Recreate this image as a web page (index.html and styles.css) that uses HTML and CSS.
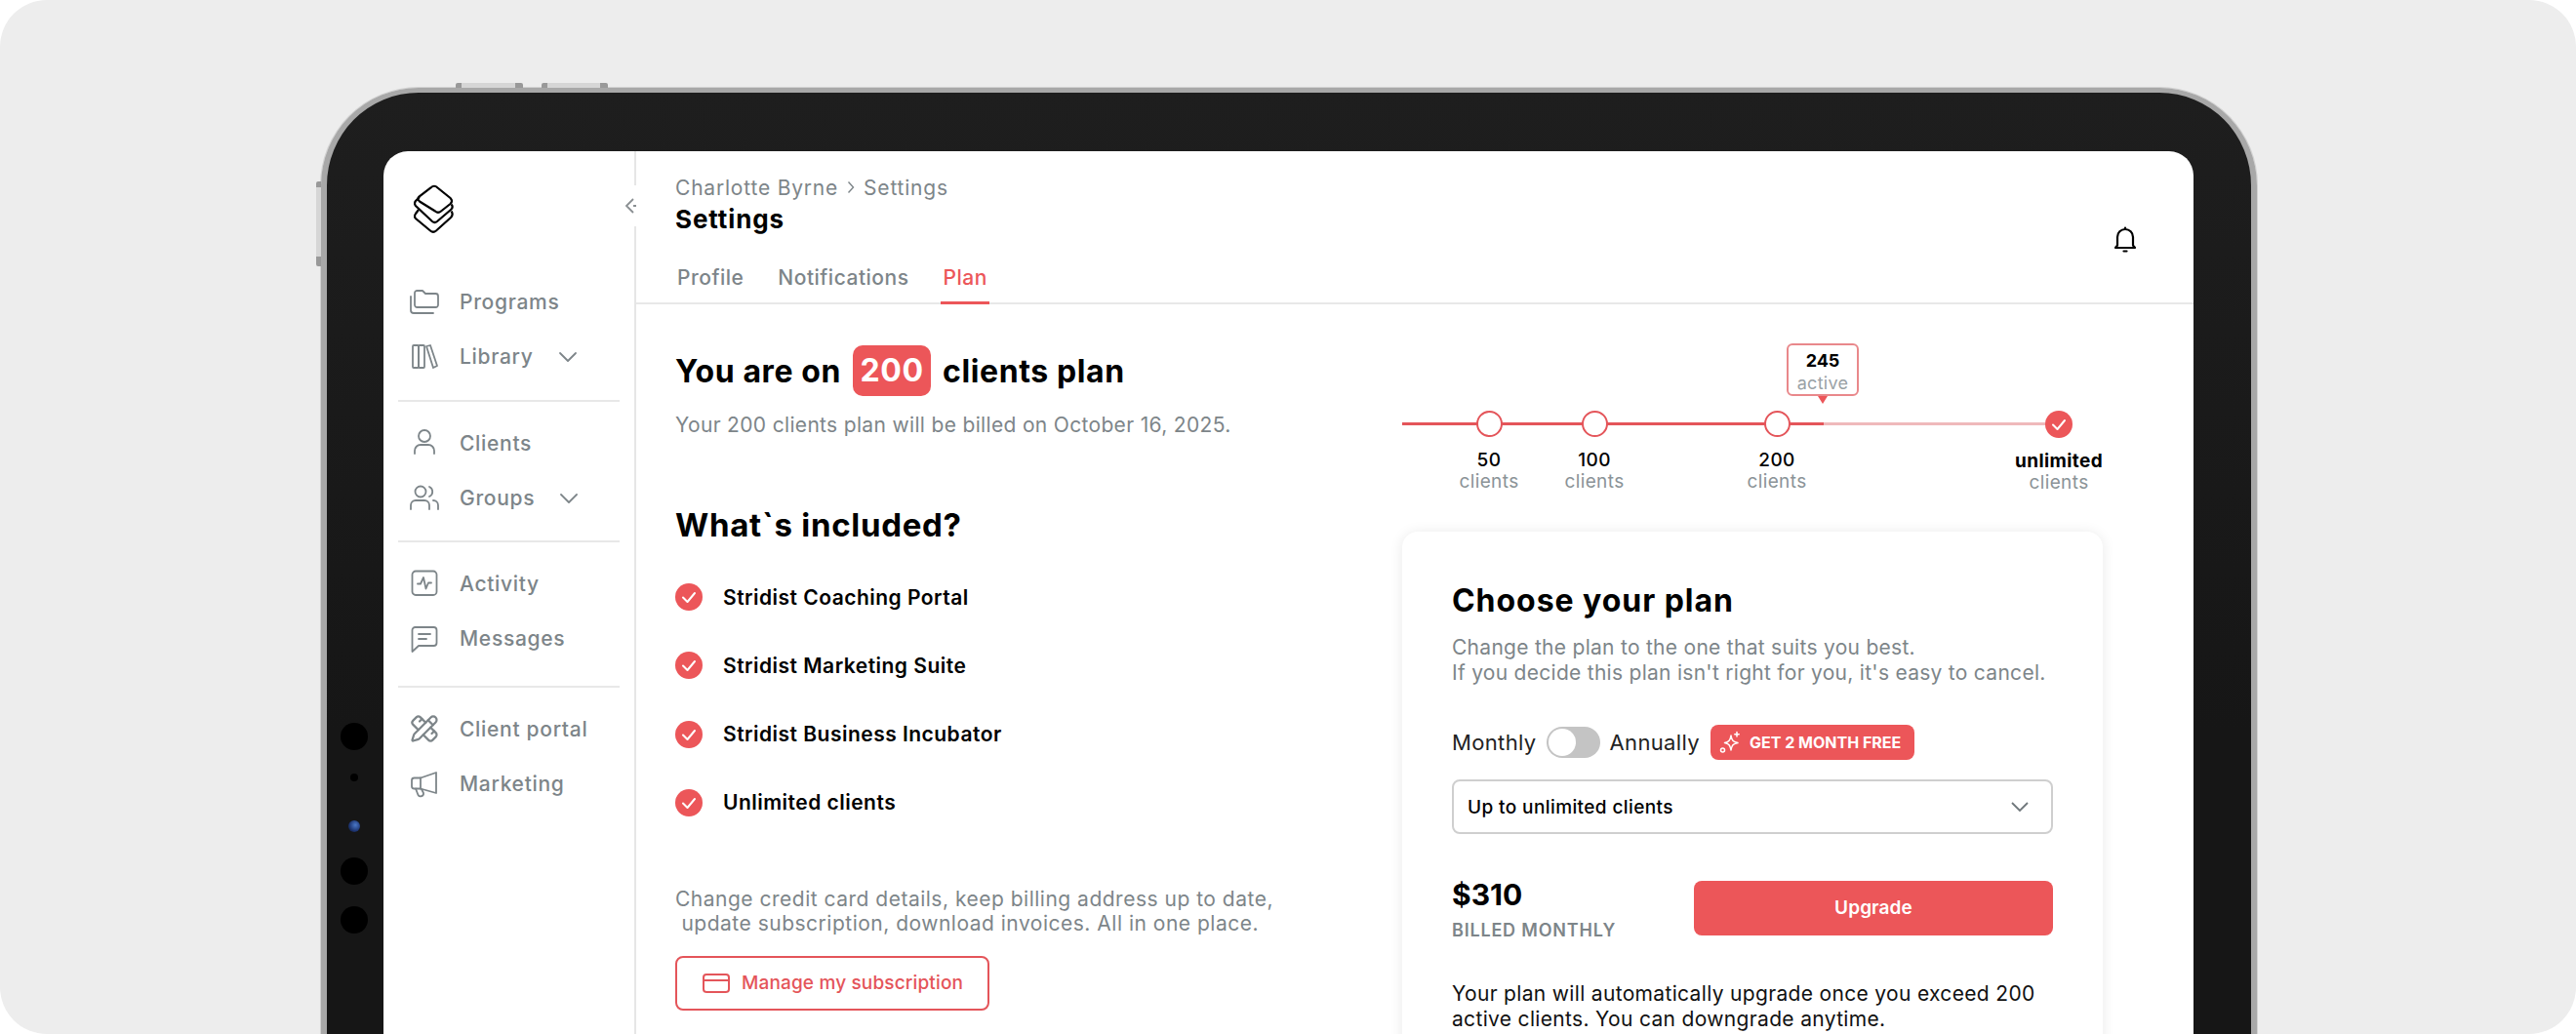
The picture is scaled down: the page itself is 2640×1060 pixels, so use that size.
FILE: index.html
```html
<!DOCTYPE html>
<html lang="en">
<head>
  <meta charset="UTF-8">
  <meta name="viewport" content="width=device-width, initial-scale=1.0">
  <title>Settings – Plan</title>
  <link rel="stylesheet" href="styles.css">
</head>
<body>
  <div class="stage">
    <div class="tablet">
      <span class="hw-btn hw-top-a"></span>
      <span class="hw-btn hw-top-b"></span>
      <span class="hw-btn hw-left"></span>
      <span class="lens lens-a"></span>
      <span class="lens lens-b"></span>
      <span class="lens lens-c"></span>
      <span class="lens lens-d"></span>
      <span class="lens lens-e"></span>

      <div class="screen">
        <div class="sidebar">
          <svg class="logo" viewBox="0 0 42 50">
            <path d="M17.5 3.5Q21 0 24.5 3.5L37.5 14Q40.5 17 37.5 20L28 27.5Q25 30 22 27.5L6 17.5Q3 15 5.5 12.5Z"/>
            <path d="M6 13L2 17Q0 19.5 2 22L19 38Q21.5 40 24 38L38 26Q41 23 38.5 20.5"/>
            <path d="M5 26L2 30Q0 33 2 35L17 47.5Q20 50 23 47.5L38 34Q41 31 38.5 27.5"/>
          </svg>
          <div class="collapse">
            <svg viewBox="0 0 14 18"><path d="M9 2L2 9L9 16M9 9H12"/></svg>
          </div>

          <div class="nav nav-first">
            <a class="nav-item">
              <svg viewBox="0 0 30 30"><path d="M5 19V6.5A2.5 2.5 0 0 1 7.5 4H13L16 7H26.5A2.5 2.5 0 0 1 29 9.500V18.500A2.500 2.500 0 0 1 26.500 21H7.500A2.500 2.500 0 0 1 5 18.500Z"/><path d="M1 10V24A3 3 0 0 0 4 27H24"/></svg>
              <span>Programs</span>
            </a>
            <a class="nav-item">
              <svg viewBox="0 0 30 30"><rect x="3" y="3" width="6" height="23" rx="1"/><rect x="9" y="3" width="6" height="23" rx="1"/><path d="M17 4L21 3L28 24L24 26Z"/></svg>
              <span>Library</span>
              <svg class="caret" viewBox="0 0 20 12"><path d="M2 2L10 10L18 2"/></svg>
            </a>
          </div>
          <div class="nav">
            <a class="nav-item">
              <svg viewBox="0 0 30 30"><circle cx="15" cy="8" r="6"/><path d="M5 26V23A6 6 0 0 1 11 17H19A6 6 0 0 1 25 23V26"/></svg>
              <span>Clients</span>
            </a>
            <a class="nav-item">
              <svg viewBox="0 0 30 30"><circle cx="11" cy="8" r="5.500"/><path d="M20 3A5.500 5.500 0 0 1 20 13"/><path d="M1 26V22A5 5 0 0 1 6 17H15A5 5 0 0 1 20 22V26"/><path d="M24 17A5 5 0 0 1 29 22V26"/></svg>
              <span>Groups</span>
              <svg class="caret" viewBox="0 0 20 12"><path d="M2 2L10 10L18 2"/></svg>
            </a>
          </div>
          <div class="nav">
            <a class="nav-item">
              <svg viewBox="0 0 30 30"><rect x="2.500" y="2.500" width="25" height="24.500" rx="3.500"/><path d="M8 15.500H11L14 9L16.500 20.500L19 14.500H22"/></svg>
              <span>Activity</span>
            </a>
            <a class="nav-item">
              <svg viewBox="0 0 30 30"><path d="M2.500 28V6A3 3 0 0 1 5.500 3H24.500A3 3 0 0 1 27.500 6V19A3 3 0 0 1 24.500 22H9Z"/><path d="M9 10H21M9 15H17"/></svg>
              <span>Messages</span>
            </a>
          </div>
          <div class="nav nav-last">
            <a class="nav-item">
              <svg viewBox="0 0 24 24"><path d="M13 7 8.700 2.700a2.410 2.410 0 0 0-3.400 0L2.700 5.300a2.410 2.410 0 0 0 0 3.400L7 13"/><path d="m8 6 2-2"/><path d="m18 16 2-2"/><path d="m17 11 4.300 4.300c.94.94.94 2.460 0 3.400l-2.600 2.600c-.94.94-2.460.94-3.400 0L11 17"/><path d="M21.174 6.812a1 1 0 0 0-3.986-3.987L3.842 16.174a2 2 0 0 0-.5.83l-1.321 4.352a.5.5 0 0 0 .623.622l4.353-1.320a2 2 0 0 0 .83-.497z"/><path d="m15 5 4 4"/></svg>
              <span>Client portal</span>
            </a>
            <a class="nav-item">
              <svg viewBox="0 0 30 30"><path d="M27 3L11 8.500H4.500A2.500 2.500 0 0 0 2 11V17A2.500 2.500 0 0 0 4.500 19.500H11L27 24Z"/><path d="M11 8.500V19.500"/><path d="M6 19.500L8.500 26A3 3 0 0 0 14 24L12 20"/></svg>
              <span>Marketing</span>
            </a>
          </div>
        </div>

        <div class="main">
          <div class="header">
            <div class="header-top">
              <div>
                <div class="crumbs">
                  <span>Charlotte Byrne</span>
                  <svg viewBox="0 0 8 14"><path d="M1.500 1.500L6.500 7L1.500 12.500"/></svg>
                  <span>Settings</span>
                </div>
                <h1 class="page-title">Settings</h1>
              </div>
              <svg class="bell" viewBox="0 0 24 28"><path d="M2 23H22L20 20.500V12A8 8 0 0 0 4 12V20.500Z"/><path d="M12 4V2.500"/><path d="M10.500 26.500H13.500"/></svg>
            </div>
            <div class="tabs">
              <a class="tab">Profile</a>
              <a class="tab">Notifications</a>
              <a class="tab tab-active">Plan</a>
            </div>
          </div>

          <div class="content">
            <div class="left">
              <div class="plan-title">
                <span>You are on</span>
                <span class="plan-badge">200</span>
                <span>clients plan</span>
              </div>
              <p class="muted billed">Your 200 clients plan will be billed on October 16, 2025.</p>

              <h2 class="section-title">What`s included?</h2>
              <ul class="features">
                <li>
                  <svg class="check" viewBox="0 0 28 28"><circle cx="14" cy="14" r="14"/><path d="M8 14.500L12.500 19L20 10"/></svg>
                  Stridist Coaching Portal
                </li>
                <li>
                  <svg class="check" viewBox="0 0 28 28"><circle cx="14" cy="14" r="14"/><path d="M8 14.500L12.500 19L20 10"/></svg>
                  Stridist Marketing Suite
                </li>
                <li>
                  <svg class="check" viewBox="0 0 28 28"><circle cx="14" cy="14" r="14"/><path d="M8 14.500L12.500 19L20 10"/></svg>
                  Stridist Business Incubator
                </li>
                <li>
                  <svg class="check" viewBox="0 0 28 28"><circle cx="14" cy="14" r="14"/><path d="M8 14.500L12.500 19L20 10"/></svg>
                  Unlimited clients
                </li>
              </ul>

              <p class="muted manage-text">Change credit card details, keep billing address up to date,<br>&nbsp;update subscription, download invoices. All in one place.</p>
              <a class="manage-btn">
                <svg viewBox="0 0 28 20"><rect x="1" y="1" width="26" height="18" rx="3"/><path d="M1 7H27"/></svg>
                Manage my subscription
              </a>
            </div>

            <div class="right">
              <div class="scale">
                <div class="track"><div class="track-fill"></div></div>
                <div class="tip"><b>245</b><span>active</span></div>
                <div class="stop" style="left: 89px"><i class="dot"></i><b>50</b><span>clients</span></div>
                <div class="stop" style="left: 197px"><i class="dot"></i><b>100</b><span>clients</span></div>
                <div class="stop" style="left: 384px"><i class="dot"></i><b>200</b><span>clients</span></div>
                <div class="stop stop-top" style="left: 673px">
                  <svg class="check" viewBox="0 0 28 28"><circle cx="14" cy="14" r="14"/><path d="M8 14.500L12.500 19L20 10"/></svg>
                  <b>unlimited</b><span>clients</span>
                </div>
              </div>

              <div class="card">
                <h2 class="card-title">Choose your plan</h2>
                <p class="muted card-sub">Change the plan to the one that suits you best.<br>If you decide this plan isn't right for you, it's easy to cancel.</p>

                <div class="billing">
                  <span>Monthly</span>
                  <span class="toggle"><i></i></span>
                  <span>Annually</span>
                  <span class="promo">
                    <svg viewBox="0 0 22 24"><path d="M12 5C12.800 10 14 11.500 19 12.500C14 13.500 12.800 15 12 20C11.200 15 10 13.500 5.500 12.500C10 11.500 11.200 10 12 5Z"/><path d="M18 1.500V6M15.800 3.700H20.200"/><circle cx="3.500" cy="20" r="2"/></svg>
                    GET 2 MONTH FREE
                  </span>
                </div>

                <div class="select">
                  <span>Up to unlimited clients</span>
                  <svg viewBox="0 0 20 12"><path d="M2 2L10 10L18 2"/></svg>
                </div>

                <div class="price-row">
                  <div class="price-col">
                    <div class="price">$310</div>
                    <div class="price-note">BILLED MONTHLY</div>
                  </div>
                  <a class="upgrade">Upgrade</a>
                </div>

                <p class="card-note">Your plan will automatically upgrade once you exceed 200<br>active clients. You can downgrade anytime.</p>
              </div>
            </div>
          </div>
        </div>
      </div>
    </div>
  </div>
</body>
</html>
```

FILE: styles.css
```css
* {
  box-sizing: border-box;
}
body {
  margin: 0;
  background: #fff;
  font-family: Inter, "Noto Sans", sans-serif;
  color: #000;
}
.stage {
  height: 1060px;
  padding: 90px 0 0 329px;
  background: #ededed;
  border-radius: 48px;
  overflow: hidden;
}
.tablet {
  position: relative;
  width: 1984px;
  height: 1100px;
  padding: 60px 59px 0 58px;
  background: linear-gradient(#1e1e1e, #161616 60%);
  border: solid #a8a8a8;
  border-width: 5px 6px;
  border-radius: 100px;
  box-shadow: 0 0 0 1px #d2d2d2;
}
.hw-btn {
  position: absolute;
}
.hw-top-a, .hw-top-b {
  top: -10px;
  height: 5px;
  border-radius: 2px 2px 0 0;
  background: linear-gradient(90deg, #999 0 6px, #d6d6d6 6px calc(100% - 8px), #999 calc(100% - 8px));
}
.hw-top-a {
  left: 132px;
  width: 69px;
}
.hw-top-b {
  left: 220px;
  width: 68px;
}
.hw-left {
  left: -11px;
  top: 91px;
  width: 5px;
  height: 87px;
  border-radius: 2px 0 0 2px;
  background: linear-gradient(#999 0 6px, #d6d6d6 6px calc(100% - 10px), #999 calc(100% - 10px));
}
.lens {
  position: absolute;
  left: 14px;
  width: 28px;
  height: 28px;
  background: #000;
  border-radius: 50%;
}
.lens-a { top: 646px; }
.lens-b { top: 698px; left: 24px; width: 8px; height: 8px; }
.lens-c {
  top: 746px;
  left: 22px;
  width: 12px;
  height: 12px;
  background: radial-gradient(circle at 60% 40%, #4a78c8, #1d3470 60%, #0c1428);
}
.lens-d { top: 784px; }
.lens-e { top: 834px; }

.screen {
  display: flex;
  height: 1040px;
  background: #fff;
  border-radius: 25px 25px 0 0;
  overflow: hidden;
}

/* sidebar */
.sidebar {
  position: relative;
  width: 259px;
  flex-shrink: 0;
  padding: 34px 15px 0;
  border-right: 2px solid #e6e6e6;
}
.logo {
  display: block;
  width: 42px;
  height: 50px;
  margin-left: 16px;
  fill: none;
  stroke: #000;
  stroke-width: 2.200;
}
.collapse {
  position: absolute;
  top: 35px;
  right: -12px;
  width: 22px;
  height: 42px;
  display: flex;
  align-items: center;
  background: #fff;
}
.collapse svg {
  width: 14px;
  height: 18px;
  fill: none;
  stroke: #8a8f92;
  stroke-width: 1.800;
}
.nav {
  padding: 14px 0;
  border-bottom: 2px solid #e8e8e8;
}
.nav-first {
  margin-top: 28px;
  padding-bottom: 16px;
}
.nav:nth-of-type(3) {
  padding-bottom: 15px;
}
.nav:nth-of-type(4) {
  padding-bottom: 20px;
}
.nav-last {
  border-bottom: none;
}
.nav-item {
  display: flex;
  align-items: center;
  gap: 21px;
  height: 56.500px;
  padding-left: 12px;
  color: #7d8589;
  font-size: 21px;
  font-weight: 500;
  letter-spacing: 0.700px;
}
.nav-item > svg {
  width: 30px;
  height: 30px;
  flex-shrink: 0;
  fill: none;
  stroke: #7d8589;
  stroke-width: 1.800;
  stroke-linecap: round;
  stroke-linejoin: round;
}
.nav-item .caret {
  width: 20px;
  height: 12px;
  margin-left: 4px;
}

/* header */
.main {
  flex: 1;
  min-width: 0;
}
.header-top {
  display: flex;
  justify-content: space-between;
  height: 111px;
  padding: 25px 58px 0 40px;
}
.crumbs {
  display: flex;
  align-items: center;
  gap: 9px;
  height: 24px;
  color: #7d8589;
  font-size: 21px;
  letter-spacing: 0.800px;
}
.crumbs svg {
  width: 8px;
  height: 14px;
  fill: none;
  stroke: #7d8589;
  stroke-width: 1.400;
}
.page-title {
  margin: 6px 0 0;
  font-size: 26px;
  line-height: 30px;
  font-weight: 700;
  letter-spacing: 0.900px;
}
.bell {
  align-self: flex-end;
  width: 24px;
  height: 28px;
  margin-bottom: 7px;
  fill: none;
  stroke: #000;
  stroke-width: 2.200;
  stroke-linecap: round;
  stroke-linejoin: round;
}
.tabs {
  display: flex;
  gap: 31px;
  height: 46px;
  padding-left: 40px;
  border-bottom: 2px solid #e8e8e8;
}
.tab {
  height: 46px;
  padding: 0 2px;
  color: #7d8589;
  font-size: 21px;
  font-weight: 500;
  line-height: 38px;
  letter-spacing: 0.500px;
}
.tab-active {
  color: #ec5659;
  border-bottom: 3px solid #ec5659;
}

/* left column */
.content {
  display: flex;
  padding: 0 93px 0 40px;
}
.left {
  flex: 1;
  padding-top: 42px;
}
.muted {
  margin: 0;
  color: #7d8589;
  font-size: 21px;
}
.plan-title {
  display: flex;
  align-items: center;
  height: 52px;
  gap: 12px;
  font-size: 32px;
  font-weight: 700;
  letter-spacing: 0.600px;
}
.plan-badge {
  width: 80px;
  height: 52px;
  color: #fff;
  background: #ec5659;
  border-radius: 10px;
  text-align: center;
  line-height: 52px;
}
.billed {
  margin-top: 18px;
  line-height: 24px;
  letter-spacing: 0.330px;
}
.section-title {
  margin: 72px 0 0;
  font-size: 33px;
  line-height: 36px;
  font-weight: 700;
  letter-spacing: 0.700px;
}
.features {
  display: flex;
  flex-direction: column;
  gap: 40.300px;
  margin: 41px 0 0;
  padding: 0;
  list-style: none;
}
.features li {
  display: flex;
  align-items: center;
  gap: 21px;
  height: 30px;
  font-size: 21px;
  font-weight: 600;
  letter-spacing: 0.480px;
}
.check {
  width: 28px;
  height: 28px;
  flex-shrink: 0;
}
.check circle {
  fill: #ec5659;
}
.check path {
  fill: none;
  stroke: #fff;
  stroke-width: 2;
  stroke-linecap: round;
  stroke-linejoin: round;
}
.manage-text {
  margin-top: 71px;
  line-height: 25px;
  letter-spacing: 0.500px;
}
.manage-btn {
  display: inline-flex;
  align-items: center;
  gap: 12px;
  width: 322px;
  height: 56px;
  margin-top: 21px;
  padding-left: 26px;
  color: #e4555a;
  border: 2px solid #e4555a;
  border-radius: 8px;
  font-size: 19px;
  font-weight: 500;
  letter-spacing: 0.150px;
}
.manage-btn svg {
  width: 28px;
  height: 20px;
  flex-shrink: 0;
  fill: none;
  stroke: #e4555a;
  stroke-width: 2;
}

/* plan scale */
.right {
  width: 718px;
  flex-shrink: 0;
}
.scale {
  position: relative;
  height: 233px;
}
.track {
  position: absolute;
  left: 0;
  top: 121px;
  width: 673px;
  height: 3px;
  background: #efb9bb;
}
.track-fill {
  width: 432px;
  height: 3px;
  background: #e4555a;
}
.tip {
  position: absolute;
  left: 394px;
  top: 40px;
  width: 74px;
  height: 54px;
  padding-top: 4px;
  text-align: center;
  background: #fff;
  border: 2px solid #e9888b;
  border-radius: 6px;
}
.tip::after {
  content: "";
  position: absolute;
  left: 30px;
  bottom: -10px;
  border: solid transparent;
  border-width: 8px 5px 0;
  border-top-color: #ec5659;
}
.tip b, .tip span {
  display: block;
  font-size: 18px;
  line-height: 23px;
}
.tip b {
  font-weight: 700;
}
.tip span {
  color: #9aa2a6;
  letter-spacing: 0.300px;
}
.stop {
  position: absolute;
  top: 109px;
  width: 120px;
  margin-left: -60px;
  display: flex;
  flex-direction: column;
  align-items: center;
  font-size: 19px;
  line-height: 22px;
  letter-spacing: 0.400px;
}
.stop b {
  margin-top: 13px;
  font-weight: 500;
}
.stop span {
  color: #8b9397;
}
.stop-top b {
  font-weight: 700;
}
.dot {
  width: 27px;
  height: 27px;
  background: #fff;
  border: 2px solid #e4555a;
  border-radius: 50%;
}

/* card */
.card {
  height: 560px;
  padding: 53px 51px 0;
  background: #fff;
  border-radius: 16px;
  box-shadow: 0 1px 14px rgba(0, 0, 0, 0.09);
}
.card-title {
  margin: 0;
  font-size: 32px;
  line-height: 36px;
  font-weight: 700;
  letter-spacing: 0.950px;
}
.card-sub {
  margin-top: 17px;
  line-height: 25.500px;
  letter-spacing: 0.280px;
}
.billing {
  display: flex;
  align-items: center;
  height: 36px;
  margin-top: 41px;
  font-size: 22px;
  letter-spacing: 0.350px;
  color: #222;
}
.toggle {
  width: 55px;
  height: 32px;
  margin: 0 10px 0 10px;
  padding: 2px;
  background: #c4c4c4;
  border-radius: 16px;
}
.toggle i {
  display: block;
  width: 28px;
  height: 28px;
  background: #fff;
  border-radius: 50%;
}
.promo {
  display: flex;
  align-items: center;
  gap: 9px;
  width: 209px;
  height: 36px;
  margin-left: 11px;
  padding-left: 9px;
  color: #fff;
  background: #ec5659;
  border-radius: 8px;
  font-size: 16px;
  font-weight: 700;
  letter-spacing: 0;
}
.promo svg {
  width: 22px;
  height: 24px;
  fill: none;
  stroke: #fff;
  stroke-width: 1.500;
  stroke-linecap: round;
  stroke-linejoin: round;
}
.select {
  display: flex;
  align-items: center;
  justify-content: space-between;
  height: 56px;
  margin-top: 20px;
  padding: 0 22px 0 14px;
  border: 2px solid #cfcfcf;
  border-radius: 8px;
  font-size: 19px;
  font-weight: 500;
  letter-spacing: 0.400px;
}
.select svg {
  width: 20px;
  height: 12px;
  fill: none;
  stroke: #6f777b;
  stroke-width: 1.800;
}
.price-row {
  display: flex;
  justify-content: space-between;
  margin-top: 44px;
}
.price {
  font-size: 30px;
  line-height: 36px;
  font-weight: 700;
}
.price-note {
  margin-top: 7px;
  color: #7d8589;
  font-size: 18px;
  line-height: 24px;
  font-weight: 600;
  letter-spacing: 0.800px;
}
.upgrade {
  width: 368px;
  height: 56px;
  margin-top: 4px;
  color: #fff;
  background: #ec5659;
  border-radius: 8px;
  font-size: 19px;
  font-weight: 600;
  line-height: 56px;
  letter-spacing: 0.100px;
  text-align: center;
}
.card-note {
  margin: 40px 0 0;
  font-size: 21px;
  line-height: 26px;
  letter-spacing: 0.330px;
  color: #111;
}
```
